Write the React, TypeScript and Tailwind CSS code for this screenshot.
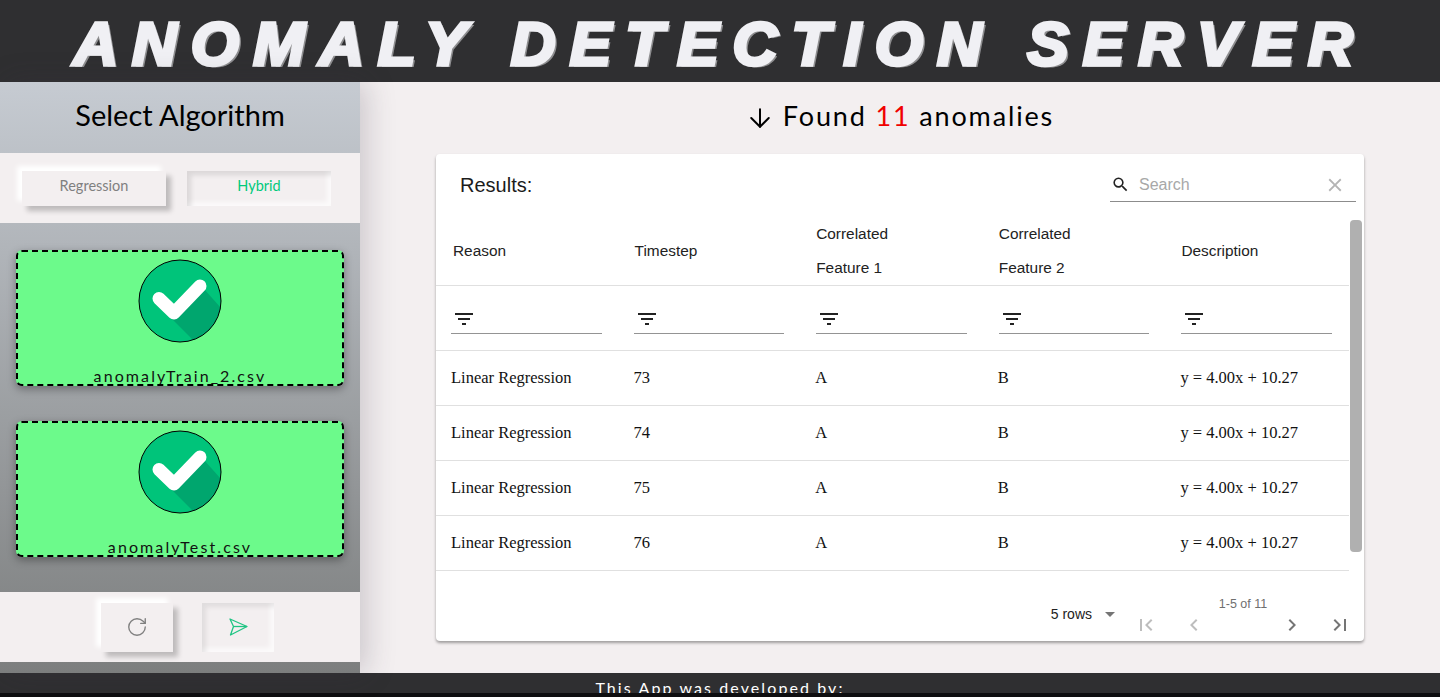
import { ArrowDown, RotateCw } from "lucide-react";
import {
  MdArrowDropDown,
  MdChevronLeft,
  MdChevronRight,
  MdClear,
  MdFilterList,
  MdFirstPage,
  MdLastPage,
  MdSearch,
} from "react-icons/md";

const ROWS = [73, 74, 75, 76];

function CheckBadge() {
  return (
    <svg width="84" height="84" viewBox="0 0 84 84" className="shrink-0">
      <defs>
        <clipPath id="badge-clip">
          <circle cx="42" cy="42" r="41" />
        </clipPath>
      </defs>
      <circle cx="42" cy="42" r="41" fill="#00c47a" />
      <polygon
        points="34,60 58,84 84,84 84,50 66,30"
        fill="#00a66e"
        clipPath="url(#badge-clip)"
      />
      <circle cx="42" cy="42" r="41" fill="none" stroke="#000" strokeWidth="1" />
      <path
        d="M21 39.5 L36 54 L62 27"
        fill="none"
        stroke="#fff"
        strokeWidth="13"
        strokeLinecap="round"
        strokeLinejoin="round"
      />
    </svg>
  );
}

function FileCard({ name }: { name: string }) {
  return (
    <div className="flex h-[136px] flex-col items-center overflow-hidden rounded-md border-2 border-dashed border-black bg-[#6cfa8b] pt-[7px] shadow-[0_3px_8px_rgba(0,0,0,0.35)]">
      <CheckBadge />
      <p className="mt-[23px] shrink-0 text-[16px] leading-5 tracking-[2.1px] text-[#111]">
        {name}
      </p>
    </div>
  );
}

function SendIcon() {
  return (
    <svg width="20" height="20" viewBox="0 0 20 20" fill="none" stroke="#1fc483" strokeWidth="1.3" strokeLinejoin="round">
      <path d="M2 2 L19 9.5 L2.5 18 L5.5 9.5 Z" />
      <path d="M5.5 9.5 H19" />
    </svg>
  );
}

function FilterCell() {
  return (
    <div className="pl-[15px] pr-[17px] pt-[20px]">
      <div className="flex h-[28px] items-center border-b border-[#949494] pb-[2px] pl-px">
        <MdFilterList size={24} className="text-[#222]" />
      </div>
    </div>
  );
}

export default function App() {
  return (
    <div className="flex h-[697px] flex-col overflow-hidden bg-[#f3eff0] font-['Lato',sans-serif]">
      <header className="flex h-[82px] shrink-0 items-center justify-center bg-[#2f2f31] pt-[5px]">
        <h1 className="whitespace-nowrap font-['Liberation_Sans',sans-serif] text-[62px] font-bold italic leading-none tracking-[14.1px] text-[#f0f0f4] [-webkit-text-stroke:3.5px_#f0f0f4] [text-shadow:3px_2px_0_#8e8e90]">
          ANOMALY DETECTION SERVER
        </h1>
      </header>

      <div className="flex min-h-0 flex-1">
        <aside className="relative z-10 flex w-[360px] shrink-0 flex-col bg-gradient-to-b from-[#c6cbd2] to-[#7c7e7e] shadow-[6px_0_28px_rgba(60,50,70,0.22)]">
          <div className="flex h-[71px] items-center justify-center pb-[6px] text-[29px] text-black">
            Select Algorithm
          </div>

          <div className="flex h-[70px] items-center gap-[21px] bg-[#f3eff0] pl-[22px]">
            <button className="h-[35px] w-[144px] bg-[#f3eff0] pb-[5px] text-[14.5px] text-[#808080] shadow-[5px_5px_5px_rgba(0,0,0,0.22),-5px_-5px_5px_#fff]">
              Regression
            </button>
            <button className="h-[35px] w-[144px] bg-[#f3eff0] pb-[5px] text-[14.5px] text-[#00c97b] shadow-[inset_4px_4px_5px_rgba(0,0,0,0.1),inset_-4px_-4px_5px_rgba(255,255,255,0.7)]">
              Hybrid
            </button>
          </div>

          <div className="flex h-[369px] flex-col gap-[35px] px-4 pt-[27px]">
            <FileCard name="anomalyTrain_2.csv" />
            <FileCard name="anomalyTest.csv" />
          </div>

          <div className="flex h-[70px] items-center justify-center gap-[29px] bg-[#f3eff0] pl-[15px]">
            <button className="flex h-[49px] w-[72px] items-center justify-center bg-[#f3eff0] text-[#808080] shadow-[5px_5px_5px_rgba(0,0,0,0.22),-5px_-5px_5px_#fff]">
              <RotateCw size={22} strokeWidth={1.5} />
            </button>
            <button className="flex h-[49px] w-[72px] items-center justify-center bg-[#f3eff0] shadow-[inset_4px_4px_5px_rgba(0,0,0,0.08),inset_-4px_-4px_5px_rgba(255,255,255,0.7)]">
              <SendIcon />
            </button>
          </div>
        </aside>

        <main className="flex min-w-0 flex-1 flex-col">
          <div className="flex h-[72px] items-center justify-center gap-[8px] pb-[4px] pr-[1px] text-[27px] tracking-[1.85px] text-black">
            <ArrowDown size={30} strokeWidth={1.6} className="mt-[3px]" />
            <p>
              Found <span className="text-[#f00000]">11</span> anomalies
            </p>
          </div>

          <section className="ml-[76px] flex h-[487px] w-[928px] flex-col rounded bg-white font-['Liberation_Sans',sans-serif] shadow-[0_2px_3px_rgba(0,0,0,0.35)]">
            <div className="flex h-[66px] shrink-0 items-start justify-between pl-6 pr-2 pt-[17px]">
              <h2 className="text-[20px] leading-7 text-[#1c1c1c]">Results:</h2>
              <div className="flex h-[31px] w-[246px] items-center border-b border-[#8c8c8c] pb-[3px] pl-[1px] pr-[10px]">
                <MdSearch size={19} className="text-[#222]" />
                <span className="ml-[9px] flex-1 text-[16px] text-[#a8a8a8]">Search</span>
                <MdClear size={22} className="text-[#b4b4b4]" />
              </div>
            </div>

            <div className="flex h-[351px] shrink-0">
              <div className="w-[913px] shrink-0">
                <div className="grid h-[66px] grid-cols-5 items-center border-b border-[#e0e0e0] text-[15.4px] leading-[34px] text-[#222] [&>div]:-mt-[3px]">
                  <div className="pl-[17px]">Reason</div>
                  <div className="pl-4">Timestep</div>
                  <div className="pl-[15px]">
                    Correlated
                    <br />
                    Feature 1
                  </div>
                  <div className="pl-[15px]">
                    Correlated
                    <br />
                    Feature 2
                  </div>
                  <div className="pl-[15px]">Description</div>
                </div>

                <div className="grid h-[65px] grid-cols-5 border-b border-[#e0e0e0]">
                  <FilterCell />
                  <FilterCell />
                  <FilterCell />
                  <FilterCell />
                  <FilterCell />
                </div>

                {ROWS.map((step) => (
                  <div
                    key={step}
                    className="grid h-[55px] grid-cols-5 items-center border-b border-[#e0e0e0] font-['Liberation_Serif',serif] text-[16.5px] text-[#111]"
                  >
                    <div className="pl-[15px]">Linear Regression</div>
                    <div className="pl-[15px]">{step}</div>
                    <div className="pl-[14px]">A</div>
                    <div className="pl-[14px]">B</div>
                    <div className="pl-[14px]">y = 4.00x + 10.27</div>
                  </div>
                ))}
              </div>

              <div className="ml-px h-[332px] w-3 rounded-sm bg-[#b0b0b0]" />
            </div>

            <div className="flex flex-1 items-start justify-end gap-3 pr-3 pt-[25px]">
              <div className="mt-[6px] flex items-center text-[14px] text-[#222]">
                <span>5 rows</span>
                <MdArrowDropDown size={24} className="ml-[6px] text-[#757575]" />
              </div>
              <div className="flex w-[218px] flex-col items-center">
                <span className="text-[12.5px] leading-4 text-[#6f6f6f]">1-5 of 11</span>
                <div className="mt-px flex w-full justify-between">
                  <div className="flex gap-6">
                    <MdFirstPage size={24} className="text-[#bdbdbd]" />
                    <MdChevronLeft size={24} className="text-[#bdbdbd]" />
                  </div>
                  <div className="flex gap-6">
                    <MdChevronRight size={24} className="text-[#757575]" />
                    <MdLastPage size={24} className="text-[#757575]" />
                  </div>
                </div>
              </div>
            </div>
          </section>
        </main>
      </div>

      <footer className="h-6 shrink-0 bg-[#0e0e10]">
        <div className="h-5 overflow-hidden bg-[#2f2f31] text-center text-[16px] leading-[30px] tracking-[2.1px] text-white">
          This App was developed by:
        </div>
      </footer>
    </div>
  );
}
